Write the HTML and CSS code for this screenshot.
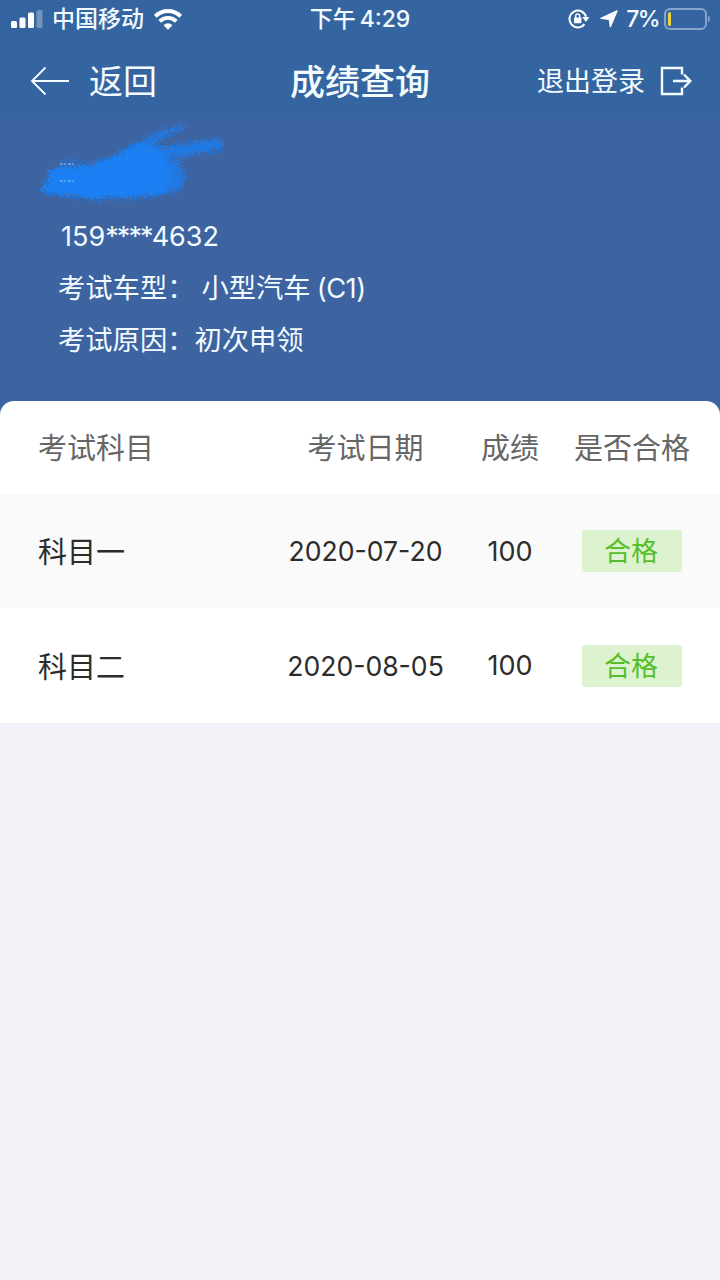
FILE: index.html
```html
<!DOCTYPE html>
<html lang="zh-CN">
<head>
    <meta charset="UTF-8">
    <meta name="viewport" content="width=device-width, initial-scale=1.0">
    <title>成绩查询</title>
    <link rel="stylesheet" href="styles.css">
</head>
<body>
    <header class="header">
        <div class="status-bar">
            <div class="status-left">
                <svg class="signal" width="32" height="18" viewBox="0 0 32 18" fill="#fff">
                    <rect x="0" y="11" width="6" height="7" rx="1.5"/>
                    <rect x="8.5" y="7.5" width="6" height="10.5" rx="1.5"/>
                    <rect x="17" y="2.5" width="6" height="15.5" rx="1.5"/>
                    <rect x="25.5" y="0" width="6" height="18" rx="1.5" opacity="0.3"/>
                </svg>
                <span class="carrier">中国移动</span>
                <svg class="wifi" width="28" height="21" viewBox="0 0 28 21" fill="none" stroke="#fff" stroke-width="3.9">
                    <path d="M1.3 7.3a18 18 0 0 1 25.4 0"/>
                    <path d="M5.8 12.3a11.6 11.6 0 0 1 16.4 0"/>
                    <path d="M9.6 16.2a6.2 6.2 0 0 1 8.8 0L14 20.7z" fill="#fff" stroke="none"/>
                </svg>
            </div>
            <div class="status-time">下午<span>4:29</span></div>
            <div class="status-right">
                <svg class="lock" width="22" height="20" viewBox="0 0 22 20" fill="none" stroke="#fff" stroke-width="2">
                    <path d="M16.5 15.2a8.4 8.4 0 1 1 1.5-7.5"/>
                    <path d="M14.2 8h7.3l-3.6 5z" fill="#fff" stroke="none"/>
                    <rect x="6" y="8.5" width="7.4" height="5.7" rx="0.8" fill="#fff" stroke="none"/>
                    <path d="M7.7 9V7a2 2 0 0 1 4 0v2" stroke-width="1.4"/>
                </svg>
                <svg class="location" width="18" height="18" viewBox="0 0 18 18" fill="#fff" stroke="#fff" stroke-width="1.4" stroke-linejoin="round">
                    <path d="M17 1L10.4 16.6 9.4 9.2 1 8.4z"/>
                </svg>
                <span class="percent">7%</span>
                <svg class="battery" width="46" height="22" viewBox="0 0 46 22">
                    <rect x="1" y="1" width="41" height="20" rx="5" fill="none" stroke="#86a5cd" stroke-width="2"/>
                    <path d="M44 7.5q2 1 2 3.5t-2 3.5z" fill="#86a5cd"/>
                    <rect x="4" y="4" width="3" height="14" rx="1.5" fill="#ecd23c"/>
                </svg>
            </div>
        </div>

        <nav class="nav">
            <a class="back">
                <svg width="40" height="30" viewBox="0 0 40 30" fill="none" stroke="#f2fbff" stroke-width="1.9">
                    <path d="M39 15H2M15.5 1.5L2 15l13.5 13.5"/>
                </svg>
                <span>返回</span>
            </a>
            <h1 class="title">成绩查询</h1>
            <a class="logout">
                <span>退出登录</span>
                <svg width="32" height="30" viewBox="0 0 32 30" fill="none" stroke="#f2fbff" stroke-width="2.4">
                    <path d="M22 8.5V2H2v26h20v-6.5"/>
                    <path d="M13 15h17M24 8.5l6.3 6.5-6.3 6.5"/>
                </svg>
            </a>
        </nav>
    </header>

    <section class="profile">
        <svg class="scribble" width="200" height="88" viewBox="0 0 200 88">
            <defs>
                <filter id="rough" x="-10%" y="-10%" width="120%" height="120%">
                    <feTurbulence type="fractalNoise" baseFrequency="0.8" numOctaves="2" seed="4" result="noise"/>
                    <feDisplacementMap in="SourceGraphic" in2="noise" scale="20" xChannelSelector="R" yChannelSelector="G"/>
                    <feGaussianBlur stdDeviation="0.7"/>
                </filter>
            </defs>
            <g filter="url(#rough)" fill="#1b80f5">
                <path opacity="0.75" d="M88 34L104 21 124 10 147 4 149 8 128 17 113 28z"/>
                <path opacity="0.8" d="M110 29L145 24 184 18 186 29 160 34 125 39z"/>
                <path opacity="0.75" d="M118 38L142 42 149 56 145 69 122 75z"/>
                <path d="M10 52L24 46 56 44 80 34 100 23 118 26 130 38 133 52 130 74 92 78 55 79 36 76 4 73 5 66 12 61z"/>
                <path fill="none" stroke="#1b80f5" stroke-width="2" opacity="0.6" d="M24 42l18-3M118 43l30-3"/>
            </g>
            <path fill="none" stroke="#7dbdf5" stroke-width="1.5" stroke-dasharray="3 1 2 2" opacity="0.7" d="M23 44h14M23 61h16"/>
        </svg>
        <p class="phone">159<span class="mask">****</span>4632</p>
        <p>考试车型：<span class="car-type">小型汽车<span class="code">(C1)</span></span></p>
        <p>考试原因：<span>初次申领</span></p>
    </section>

    <main class="scores">
        <div class="row row-head">
            <span class="subject">考试科目</span>
            <span>考试日期</span>
            <span>成绩</span>
            <span>是否合格</span>
        </div>
        <div class="row row-gray">
            <span class="subject">科目一</span>
            <span class="date">2020-07-20</span>
            <span class="score">100</span>
            <span class="tag">合格</span>
        </div>
        <div class="row">
            <span class="subject">科目二</span>
            <span class="date">2020-08-05</span>
            <span class="score">100</span>
            <span class="tag">合格</span>
        </div>
    </main>
</body>
</html>
```
FILE: styles.css
```css
* {
    box-sizing: border-box;
}

body {
    margin: 0;
    min-height: 1280px;
    font-family: Inter, "Noto Sans CJK SC", sans-serif;
    background: linear-gradient(to bottom, #3d63a1 415px, #f1f1f7 415px);
    color: #f2fbff;
    overflow: hidden;
}

svg {
    display: block;
    flex: none;
}

h1, p {
    margin: 0;
    font-weight: normal;
}

.header {
    height: 124px;
    background: linear-gradient(to bottom, #3565a0 115px, #3d63a1);
}

.status-bar,
.nav {
    display: grid;
    grid-template-columns: 1fr auto 1fr;
    align-items: center;
}

.status-bar {
    height: 38px;
    padding: 0 10px 0 11px;
    font-size: 23px;
    line-height: 38px;
}

.status-left,
.status-right {
    display: flex;
    align-items: center;
}

.status-right {
    justify-content: flex-end;
}

.carrier {
    margin: 0 10px 0 9px;
    font-weight: 500;
}

.status-time {
    padding-right: 1px;
    font-weight: 500;
}

.status-time span {
    margin-left: 4px;
}

.lock {
    margin-right: 10px;
}

.location {
    margin-right: 8px;
}

.percent {
    margin-right: 5px;
    font-weight: 500;
    letter-spacing: -1.6px;
}

.nav {
    height: 86px;
    padding: 0 28px 0 30px;
}

.back,
.logout {
    display: flex;
    align-items: center;
}

.back span,
.title,
.logout span {
    padding-bottom: 4px;
}

.logout span {
    padding-bottom: 3px;
}

.back {
    gap: 19px;
    font-size: 34px;
}

.title {
    padding-right: 2px;
    font-size: 35px;
    font-weight: 500;
}

.logout {
    justify-content: flex-end;
    gap: 15px;
    font-size: 27px;
}

.profile {
    display: flow-root;
    height: 277px;
    padding-left: 58px;
    font-size: 27.3px;
    line-height: 52px;
}

.scribble {
    margin: -4px 0 3px -21px;
}

.phone {
    padding-left: 3px;
    font-size: 27px;
}

.mask {
    letter-spacing: -1.9px;
}

.car-type {
    margin-left: 7px;
}

.code {
    margin-left: 6px;
    letter-spacing: -0.5px;
}

.scores {
    background: #fff;
    border-radius: 14px 14px 0 0;
    overflow: hidden;
    color: #2c2c2c;
}

.row {
    display: grid;
    grid-template-columns: 275px 181px 108px 136px;
    align-items: center;
    justify-items: center;
    height: 115px;
    font-size: 27px;
}

.row-head {
    height: 93px;
    padding-bottom: 3px;
    font-size: 29px;
    color: #666;
}

.row-gray {
    height: 114px;
    background: #fafafa;
}

.subject {
    justify-self: start;
    padding: 0 0 2px 38px;
    font-size: 29px;
}

.row-head .subject {
    padding-bottom: 0;
}

.date {
    font-size: 26.6px;
}

.tag {
    width: 100px;
    height: 42px;
    padding-right: 2px;
    border-radius: 3px;
    background: #ddf3d0;
    color: #57be2b;
    line-height: 43px;
    text-align: center;
}
```
